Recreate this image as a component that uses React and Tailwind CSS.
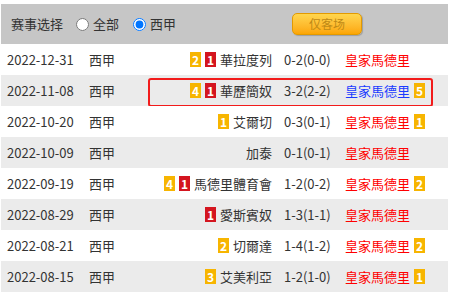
import React from "react";

const rows = [
  { date: "2022-12-31", home: "華拉度列", hb: [["y", "2"], ["r", "1"]], score: "0-2(0-0)", ab: [] },
  { date: "2022-11-08", home: "華歷簡奴", hb: [["y", "4"], ["r", "1"]], score: "3-2(2-2)", ab: [["y", "5"]], blue: true, hl: true },
  { date: "2022-10-20", home: "艾爾切", hb: [["y", "1"]], score: "0-3(0-1)", ab: [["y", "1"]] },
  { date: "2022-10-09", home: "加泰", hb: [], score: "0-1(0-1)", ab: [] },
  { date: "2022-09-19", home: "馬德里體育會", hb: [["y", "4"], ["r", "1"]], score: "1-2(0-2)", ab: [["y", "2"]] },
  { date: "2022-08-29", home: "愛斯賓奴", hb: [["r", "1"]], score: "1-3(1-1)", ab: [] },
  { date: "2022-08-21", home: "切爾達", hb: [["y", "2"]], score: "1-4(1-2)", ab: [["y", "2"]] },
  { date: "2022-08-15", home: "艾美利亞", hb: [["y", "3"]], score: "1-2(1-0)", ab: [["y", "1"]] },
];

function Badge({ c, n }) {
  return (
    <span
      className={
        "inline-flex items-center justify-center w-[11px] h-[15px] text-[12px] font-bold leading-none text-white " +
        (c === "y" ? "bg-[#f7b500]" : "bg-[#d4151f]")
      }
    >
      {n}
    </span>
  );
}

export default function App() {
  return (
    <div
      className="w-[452px] h-[292px] bg-white overflow-hidden pt-1 text-[#333] text-[13px]"
      style={{ fontFamily: '"Noto Sans CJK SC", "Noto Sans", sans-serif' }}
    >
      <div className="ml-px w-[447px]">
        <div className="h-10 bg-[#c6c6c6] flex items-center pl-[10px]">
          <span>赛事选择</span>
          <input type="radio" name="r" readOnly className="m-0 ml-[13px] w-[13px] h-[13px]" />
          <span className="ml-1">全部</span>
          <input type="radio" name="r" readOnly checked className="m-0 ml-[14px] w-[13px] h-[13px]" />
          <span className="ml-1">西甲</span>
          <div className="ml-[116px] w-[70px] h-[22px] rounded-[5px] border border-[#e39a00] bg-gradient-to-b from-[#ffd64d] to-[#fca600] shadow-[1px_1px_1px_rgba(0,0,0,0.2)] flex items-center justify-center text-[12px] text-[#c08a16]">
            仅客场
          </div>
        </div>
        {rows.map((r, i) => (
          <div
            key={i}
            className={"relative h-[31px] flex items-center pl-[6px] " + (i % 2 === 1 ? "bg-[#ebebeb]" : "bg-white")}
          >
            <span className="w-[82px] shrink-0">{r.date}</span>
            <span className="w-[40px] shrink-0">西甲</span>
            <span className="w-[143px] shrink-0 flex items-center justify-end gap-1">
              {r.hb.map((b, j) => (
                <Badge key={j} c={b[0]} n={b[1]} />
              ))}
              <span>{r.home}</span>
            </span>
            <span className="ml-[12px] w-[61px] shrink-0">{r.score}</span>
            <span className="flex items-center gap-1">
              <span className={r.blue ? "text-[#1a3cff]" : "text-[#ff0000]"}>皇家馬德里</span>
              {r.ab.map((b, j) => (
                <Badge key={j} c={b[0]} n={b[1]} />
              ))}
            </span>
            {r.hl && (
              <div className="absolute left-[147px] top-[3px] w-[285px] h-[29px] border-2 border-[#f21b1b] rounded-[3px]" />
            )}
          </div>
        ))}
      </div>
    </div>
  );
}
